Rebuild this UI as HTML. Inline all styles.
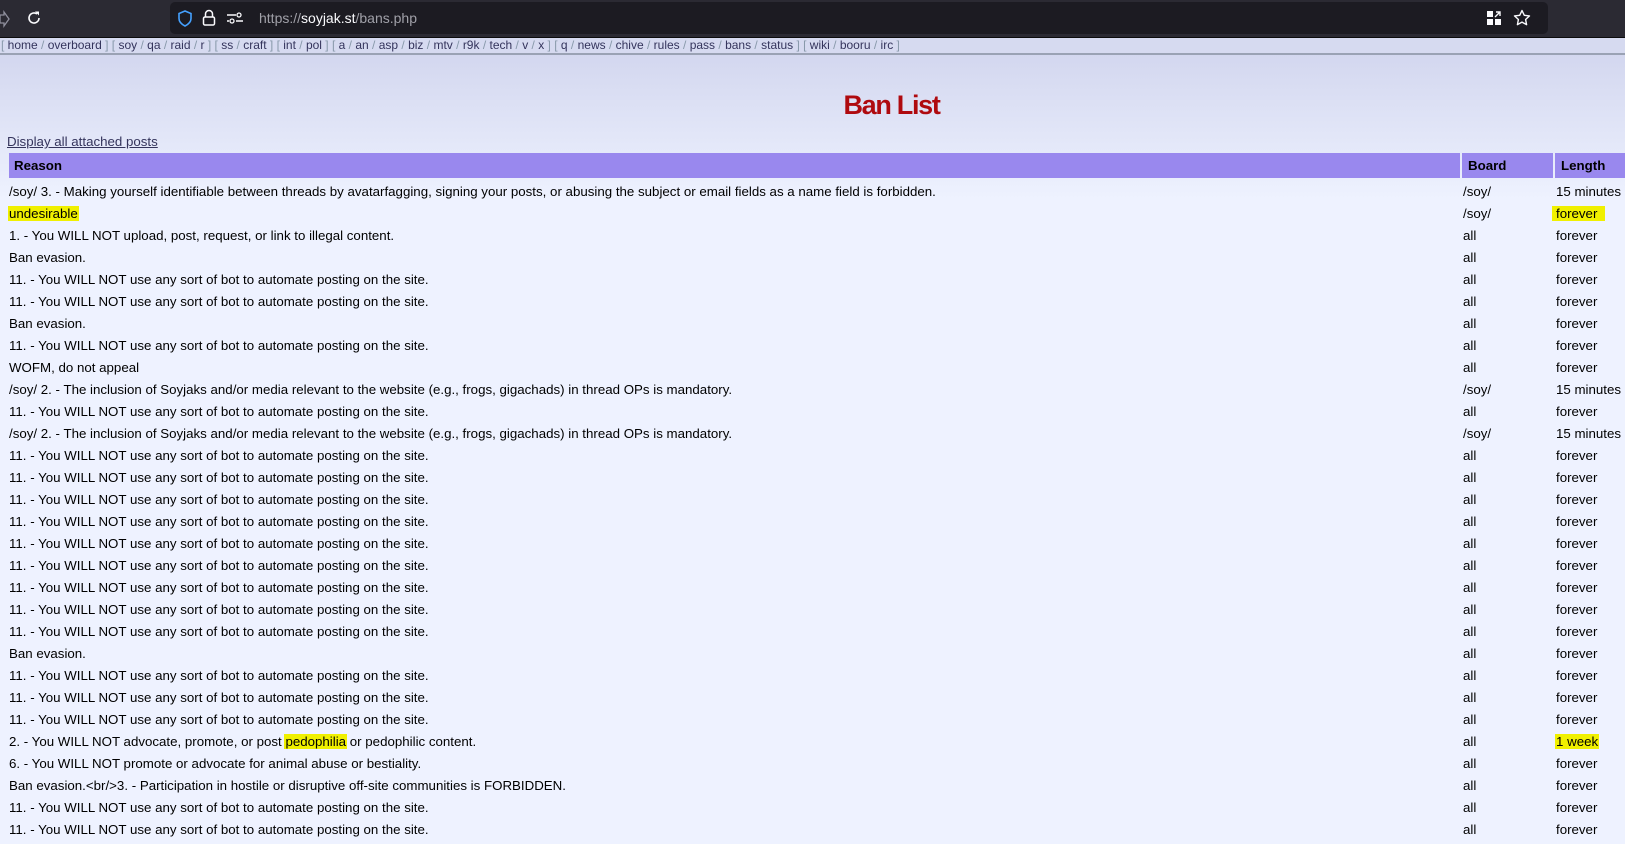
<!DOCTYPE html>
<html><head><meta charset="utf-8"><style>
*{margin:0;padding:0;box-sizing:border-box}
html,body{width:1625px;height:844px;overflow:hidden}
body{font-family:"Liberation Sans",Arial,sans-serif;font-size:13.3px;color:#000;background:linear-gradient(#d3d7ef 55px,#eef2ff 200px,#eef2ff)}
.tb{position:absolute;left:0;top:0;width:1625px;height:38px;background:#2b2a33;border-bottom:1px solid #0c0c0d}
.url{position:absolute;left:170px;top:2px;width:1378px;height:32px;background:#1c1b22;border-radius:5px}
.url span{position:absolute;left:89px;top:8px;font-size:14px;color:#a0a0a8}
.url b{font-weight:normal;color:#fbfbfe}
.nav{position:absolute;left:0;top:38px;width:1625px;height:17px;background:#d6daf0;border-bottom:2px solid #9aa2b4;font-size:12px;color:#89a;white-space:nowrap;padding-left:1px;line-height:15px}
.nav a{color:#34345c;text-decoration:none}
h1{position:absolute;left:0;width:1625px;top:90px;text-align:center;font-size:27px;color:#af0a0f;letter-spacing:-1.3px;font-weight:bold;padding-left:158px}
.lnk{position:absolute;left:7px;top:134px;color:#34345c;text-decoration:underline}
.hd{position:absolute;top:153px;height:25px;background:#9988ee;font-weight:bold;line-height:25px}
.r{position:absolute;left:0;width:1625px;height:22px;line-height:22px;white-space:nowrap}
.r span{position:absolute}
.a{left:9px}.b{left:1463px}.c{left:1556px}
.hl{background:#f0f000;padding:0 1px;margin:0 -1px}
</style></head><body>
<div class="tb">
<svg style="position:absolute;left:0;top:10px" width="10" height="18"><path d="M0 5h4v-3l5 7-5 7v-3H0z" fill="none" stroke="#8f8f9d" stroke-width="1.3"/></svg>
<svg style="position:absolute;left:26px;top:10px" width="16" height="16"><path d="M13 8a5 5 0 1 1-2-4" fill="none" stroke="#fbfbfe" stroke-width="1.6"/><path d="M9 1.5h4v4z" fill="#fbfbfe"/></svg>
<div class="url">
<svg style="position:absolute;left:7px;top:8px" width="16" height="17"><path d="M8 1l6 2.5v5c0 4-3 6-6 7.5C5 14.5 2 12.5 2 8.5v-5z" fill="none" stroke="#45a1ff" stroke-width="1.6"/></svg>
<svg style="position:absolute;left:32px;top:7px" width="14" height="18"><path d="M3.5 8V5a3.5 3.5 0 0 1 7 0v3" fill="none" stroke="#fbfbfe" stroke-width="1.5"/><rect x="1.5" y="8" width="11" height="8" rx="1.5" fill="none" stroke="#fbfbfe" stroke-width="1.5"/></svg>
<svg style="position:absolute;left:57px;top:10px" width="16" height="12"><path d="M0 3h9M0 9h2M9 9h7" stroke="#fbfbfe" stroke-width="1.5"/><circle cx="12" cy="3" r="2" fill="none" stroke="#fbfbfe" stroke-width="1.3"/><circle cx="5" cy="9" r="2" fill="none" stroke="#fbfbfe" stroke-width="1.3"/></svg>
<span>https://<b>soyjak.st</b>/bans.php</span>
<svg style="position:absolute;left:1317px;top:9px" width="16" height="15"><rect x="0" y="0" width="6" height="6" fill="#fbfbfe"/><rect x="0" y="8" width="6" height="6" fill="#fbfbfe"/><rect x="8" y="8" width="6" height="6" fill="#fbfbfe"/><path d="M8 6l5-5M9 1h4v4" stroke="#fbfbfe" stroke-width="1.4" fill="none"/></svg>
<svg style="position:absolute;left:1343px;top:7px" width="18" height="18"><path d="M9 1.5l2.3 4.8 5.2.6-3.9 3.6 1 5.2L9 13.1l-4.6 2.6 1-5.2L1.5 6.9l5.2-.6z" fill="none" stroke="#fbfbfe" stroke-width="1.4" stroke-linejoin="round"/></svg>
</div>
</div>
<div class="nav">[ <a>home</a> / <a>overboard</a> ] [ <a>soy</a> / <a>qa</a> / <a>raid</a> / <a>r</a> ] [ <a>ss</a> / <a>craft</a> ] [ <a>int</a> / <a>pol</a> ] [ <a>a</a> / <a>an</a> / <a>asp</a> / <a>biz</a> / <a>mtv</a> / <a>r9k</a> / <a>tech</a> / <a>v</a> / <a>x</a> ] [ <a>q</a> / <a>news</a> / <a>chive</a> / <a>rules</a> / <a>pass</a> / <a>bans</a> / <a>status</a> ] [ <a>wiki</a> / <a>booru</a> / <a>irc</a> ]</div>
<h1>Ban List</h1>
<a class="lnk">Display all attached posts</a>
<div class="hd" style="left:9px;width:1451px;padding-left:5px">Reason</div>
<div class="hd" style="left:1462px;width:91px;padding-left:6px">Board</div>
<div class="hd" style="left:1555px;width:70px;padding-left:6px">Length</div>
<div class="r" style="top:181px"><span class="a">/soy/ 3. - Making yourself identifiable between threads by avatarfagging, signing your posts, or abusing the subject or email fields as a name field is forbidden.</span><span class="b">/soy/</span><span class="c">15 minutes</span></div>
<div class="r" style="top:203px"><span class="a"><span class="hl" style="position:static">undesirable</span></span><span class="b">/soy/</span><span class="c"><span class="hl" style="position:static;padding:0 8px 0 4px;margin:0 0 0 -4px">forever</span></span></div>
<div class="r" style="top:225px"><span class="a">1. - You WILL NOT upload, post, request, or link to illegal content.</span><span class="b">all</span><span class="c">forever</span></div>
<div class="r" style="top:247px"><span class="a">Ban evasion.</span><span class="b">all</span><span class="c">forever</span></div>
<div class="r" style="top:269px"><span class="a">11. - You WILL NOT use any sort of bot to automate posting on the site.</span><span class="b">all</span><span class="c">forever</span></div>
<div class="r" style="top:291px"><span class="a">11. - You WILL NOT use any sort of bot to automate posting on the site.</span><span class="b">all</span><span class="c">forever</span></div>
<div class="r" style="top:313px"><span class="a">Ban evasion.</span><span class="b">all</span><span class="c">forever</span></div>
<div class="r" style="top:335px"><span class="a">11. - You WILL NOT use any sort of bot to automate posting on the site.</span><span class="b">all</span><span class="c">forever</span></div>
<div class="r" style="top:357px"><span class="a">WOFM, do not appeal</span><span class="b">all</span><span class="c">forever</span></div>
<div class="r" style="top:379px"><span class="a">/soy/ 2. - The inclusion of Soyjaks and/or media relevant to the website (e.g., frogs, gigachads) in thread OPs is mandatory.</span><span class="b">/soy/</span><span class="c">15 minutes</span></div>
<div class="r" style="top:401px"><span class="a">11. - You WILL NOT use any sort of bot to automate posting on the site.</span><span class="b">all</span><span class="c">forever</span></div>
<div class="r" style="top:423px"><span class="a">/soy/ 2. - The inclusion of Soyjaks and/or media relevant to the website (e.g., frogs, gigachads) in thread OPs is mandatory.</span><span class="b">/soy/</span><span class="c">15 minutes</span></div>
<div class="r" style="top:445px"><span class="a">11. - You WILL NOT use any sort of bot to automate posting on the site.</span><span class="b">all</span><span class="c">forever</span></div>
<div class="r" style="top:467px"><span class="a">11. - You WILL NOT use any sort of bot to automate posting on the site.</span><span class="b">all</span><span class="c">forever</span></div>
<div class="r" style="top:489px"><span class="a">11. - You WILL NOT use any sort of bot to automate posting on the site.</span><span class="b">all</span><span class="c">forever</span></div>
<div class="r" style="top:511px"><span class="a">11. - You WILL NOT use any sort of bot to automate posting on the site.</span><span class="b">all</span><span class="c">forever</span></div>
<div class="r" style="top:533px"><span class="a">11. - You WILL NOT use any sort of bot to automate posting on the site.</span><span class="b">all</span><span class="c">forever</span></div>
<div class="r" style="top:555px"><span class="a">11. - You WILL NOT use any sort of bot to automate posting on the site.</span><span class="b">all</span><span class="c">forever</span></div>
<div class="r" style="top:577px"><span class="a">11. - You WILL NOT use any sort of bot to automate posting on the site.</span><span class="b">all</span><span class="c">forever</span></div>
<div class="r" style="top:599px"><span class="a">11. - You WILL NOT use any sort of bot to automate posting on the site.</span><span class="b">all</span><span class="c">forever</span></div>
<div class="r" style="top:621px"><span class="a">11. - You WILL NOT use any sort of bot to automate posting on the site.</span><span class="b">all</span><span class="c">forever</span></div>
<div class="r" style="top:643px"><span class="a">Ban evasion.</span><span class="b">all</span><span class="c">forever</span></div>
<div class="r" style="top:665px"><span class="a">11. - You WILL NOT use any sort of bot to automate posting on the site.</span><span class="b">all</span><span class="c">forever</span></div>
<div class="r" style="top:687px"><span class="a">11. - You WILL NOT use any sort of bot to automate posting on the site.</span><span class="b">all</span><span class="c">forever</span></div>
<div class="r" style="top:709px"><span class="a">11. - You WILL NOT use any sort of bot to automate posting on the site.</span><span class="b">all</span><span class="c">forever</span></div>
<div class="r" style="top:731px"><span class="a">2. - You WILL NOT advocate, promote, or post <span class="hl" style="position:static">pedophilia</span> or pedophilic content.</span><span class="b">all</span><span class="c"><span class="hl" style="position:static">1 week</span></span></div>
<div class="r" style="top:753px"><span class="a">6. - You WILL NOT promote or advocate for animal abuse or bestiality.</span><span class="b">all</span><span class="c">forever</span></div>
<div class="r" style="top:775px"><span class="a">Ban evasion.&lt;br/&gt;3. - Participation in hostile or disruptive off-site communities is FORBIDDEN.</span><span class="b">all</span><span class="c">forever</span></div>
<div class="r" style="top:797px"><span class="a">11. - You WILL NOT use any sort of bot to automate posting on the site.</span><span class="b">all</span><span class="c">forever</span></div>
<div class="r" style="top:819px"><span class="a">11. - You WILL NOT use any sort of bot to automate posting on the site.</span><span class="b">all</span><span class="c">forever</span></div>
</body></html>
